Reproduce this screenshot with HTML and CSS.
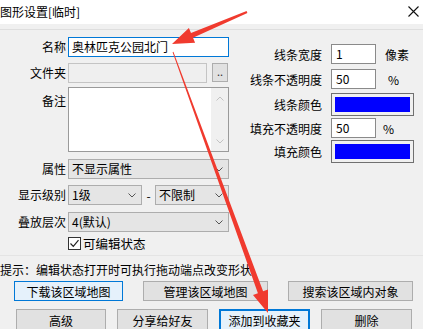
FILE: index.html
```html
<!DOCTYPE html>
<html lang="zh-CN">
<head>
<meta charset="utf-8">
<title>图形设置</title>
<link rel="stylesheet" href="styles.css">
</head>
<body>
<div class="win">
  <div class="titlebar">
    <span class="title">图形设置[临时]</span>
    <svg class="close" width="11" height="11" viewBox="0 0 11 11"><path d="M0.5 0.5 L10.5 10.5 M10.5 0.5 L0.5 10.5" stroke="#111" stroke-width="1.1" fill="none"/></svg>
  </div>
  <div class="topline"></div>
  <div class="main">
    <div class="left">
      <div class="row mt7">
        <span class="lbl">名称</span>
        <div class="ctl input focus">奥林匹克公园北门</div>
      </div>
      <div class="row mt6">
        <span class="lbl">文件夹</span>
        <div class="folder-wrap">
          <div class="input disabled folder"></div>
          <div class="dots">..</div>
        </div>
      </div>
      <div class="row notes-row mt4">
        <span class="lbl notes-lbl">备注</span>
        <div class="notes">
          <div class="notes-text"></div>
          <div class="vscroll">
            <div class="sarrow"><svg width="8" height="5" viewBox="0 0 8 5"><path d="M0.5 4.5 L4 1 L7.5 4.5" fill="none" stroke="#c2c2c2"/></svg></div>
            <div class="sarrow"><svg width="8" height="5" viewBox="0 0 8 5"><path d="M0.5 0.5 L4 4 L7.5 0.5" fill="none" stroke="#c2c2c2"/></svg></div>
          </div>
        </div>
      </div>
      <div class="row mt7">
        <span class="lbl">属性</span>
        <div class="ctl select"><span class="stext">不显示属性</span><svg class="chev" width="8" height="5" viewBox="0 0 8 5"><path d="M0.5 0.5 L4 4 L7.5 0.5" fill="none" stroke="#555"/></svg></div>
      </div>
      <div class="row mt6">
        <span class="lbl">显示级别</span>
        <div class="level">
          <div class="select half"><span class="stext">1级</span><svg class="chev" width="8" height="5" viewBox="0 0 8 5"><path d="M0.5 0.5 L4 4 L7.5 0.5" fill="none" stroke="#555"/></svg></div>
          <span class="dash">-</span>
          <div class="select half"><span class="stext">不限制</span><svg class="chev" width="8" height="5" viewBox="0 0 8 5"><path d="M0.5 0.5 L4 4 L7.5 0.5" fill="none" stroke="#555"/></svg></div>
        </div>
      </div>
      <div class="row mt7">
        <span class="lbl">叠放层次</span>
        <div class="ctl select"><span class="stext">4(默认)</span><svg class="chev" width="8" height="5" viewBox="0 0 8 5"><path d="M0.5 0.5 L4 4 L7.5 0.5" fill="none" stroke="#555"/></svg></div>
      </div>
      <div class="row check-row mt5">
        <span class="lbl"></span>
        <span class="checkbox"><svg width="11" height="11" viewBox="0 0 11 11"><path d="M1.5 5.5 L4.3 8.3 L9.5 2.2" fill="none" stroke="#222" stroke-width="1.2"/></svg></span>
        <span class="check-text">可编辑状态</span>
      </div>
    </div>
    <div class="right">
      <div class="rrow">
        <span class="rlbl">线条宽度</span>
        <div class="num">1</div>
        <span class="unit">像素</span>
      </div>
      <div class="rrow mt5">
        <span class="rlbl">线条不透明度</span>
        <div class="num">50</div>
        <span class="unit pct1">%</span>
      </div>
      <div class="rrow color-row mt4">
        <span class="rlbl">线条颜色</span>
        <div class="colorbox"><div class="swatch"></div></div>
      </div>
      <div class="rrow mt2">
        <span class="rlbl">填充不透明度</span>
        <div class="num">50</div>
        <span class="unit pct2">%</span>
      </div>
      <div class="rrow color-row mt2">
        <span class="rlbl">填充颜色</span>
        <div class="colorbox"><div class="swatch"></div></div>
      </div>
    </div>
  </div>
  <div class="hint">提示：编辑状态打开时可执行拖动端点改变形状</div>
  <div class="btnrow row1">
    <div class="btn default w109">下载该区域地图</div>
    <div class="btn w125">管理该区域地图</div>
    <div class="btn w125">搜索该区域内对象</div>
  </div>
  <div class="btnrow row2">
    <div class="btn w90">高级</div>
    <div class="btn w91">分享给好友</div>
    <div class="btn focused w91">添加到收藏夹</div>
    <div class="btn w91">删除</div>
  </div>
  <svg class="arrows" width="423" height="329" viewBox="0 0 423 329">
    <polygon fill="#f03a2e" points="246.6,11.1 191,33.1 188.9,28 172,44 195.1,42.8 193,37.7 247.4,12.9"/>
    <polygon fill="#f03a2e" points="172.6,52.2 257.9,293.3 253,295 268,313 268,289.6 263.1,291.3 173.4,51.8"/>
  </svg>
</div>
</body>
</html>
```

FILE: styles.css
```css
* { box-sizing: border-box; margin: 0; padding: 0; }
html, body { width: 423px; height: 329px; overflow: hidden; }
body {
  font-family: "Noto Sans CJK SC", "Microsoft YaHei", sans-serif;
  font-size: 12px;
  color: #000;
  background: #f0f0f0;
}
.win { position: relative; width: 423px; height: 329px; overflow: hidden; background: #f0f0f0; }

.titlebar {
  height: 24px; background: #fff;
  display: flex; align-items: center; justify-content: space-between;
  padding-right: 4px;
}
.title { line-height: 24px; font-size: 12px; }
.close { margin-top: -2px; }
.topline { height: 6px; border-bottom: 1px solid #dedede; }

.main { display: flex; }
.left { width: 229px; display: flex; flex-direction: column; }
.mt2 { margin-top: 2px; }
.mt4 { margin-top: 4px; }
.mt5 { margin-top: 5px; }
.mt6 { margin-top: 6px; }
.mt7 { margin-top: 7px; }

.row { display: flex; align-items: center; height: 20px; }
.lbl { width: 66px; margin-right: 2px; text-align: right; line-height: 20px; white-space: nowrap; flex: none; }
.ctl { width: 161px; height: 20px; flex: none; }

.input {
  background: #fff; border: 1px solid #7a7a7a;
  padding-left: 3px; line-height: 18px; white-space: nowrap; overflow: hidden;
}
.input.focus { border-color: #0078d7; }
.folder-wrap { display: flex; width: 161px; height: 20px; }
.input.disabled { background: #efefef; border-color: #c4c4c4; }
.folder { width: 139px; height: 20px; }
.dots {
  width: 16px; height: 19px; margin-left: 5px;
  background: #e1e1e1; border: 1px solid #adadad;
  text-align: center; line-height: 15px; font-size: 11px; color: #333;
}

.notes-row { height: 65px; align-items: flex-start; }
.notes-lbl { padding-top: 4px; }
.notes {
  width: 161px; height: 65px; background: #fff; border: 1px solid #9a9a9a;
  display: flex;
}
.notes-text { flex: 1; }
.vscroll {
  width: 17px; background: #f0f0f0;
  display: flex; flex-direction: column; justify-content: space-between;
}
.sarrow { height: 20px; display: flex; align-items: center; justify-content: center; }

.select {
  background: #e5e5e5; border: 1px solid #adadad;
  display: flex; align-items: center; padding-left: 3px; padding-right: 5px;
  line-height: 18px; white-space: nowrap;
}
.stext { flex: 1; }
.chev { flex: none; }
.level { display: flex; align-items: center; width: 161px; height: 20px; }
.half { width: 74px; height: 20px; }
.dash { width: 13px; text-align: center; }

.check-row { height: 13px; }
.checkbox {
  width: 13px; height: 13px; border: 1px solid #333; background: #fff;
  display: flex; align-items: center; justify-content: center; flex: none;
}
.check-text { margin-left: 2px; line-height: 13px; font-size: 12.5px; }

.right { margin-left: 11px; padding-top: 14px; display: flex; flex-direction: column; }
.rrow { display: flex; align-items: center; height: 20px; }
.rlbl { width: 82px; margin-right: 9px; text-align: right; white-space: nowrap; flex: none; }
.num {
  width: 45px; height: 20px; background: #fff; border: 1px solid #8a8a8a;
  padding-left: 4px; line-height: 18px; flex: none;
}
.unit { margin-left: 9px; }
.pct1 { margin-left: 12px; }
.pct2 { margin-left: 7px; }
.color-row { height: 23px; }
.colorbox {
  width: 83px; height: 23px; border: 1px solid #707070; background: #f0f0f0;
  padding: 3px;
}
.swatch { width: 100%; height: 100%; background: #0000ff; }

.hint {
  margin-top: 5px; border-top: 1px solid #e4e4e4;
  padding-top: 3px; line-height: 22px; white-space: nowrap;
}

.btnrow { display: flex; }
.row1 { padding-left: 14px; gap: 20px; height: 20px; }
.row2 { padding-left: 16px; gap: 11px; height: 22px; margin-top: 8px; }
.btn {
  height: 100%; background: #e1e1e1; border: 1px solid #adadad;
  display: flex; align-items: center; justify-content: center;
  white-space: nowrap; flex: none;
}
.btn.default { background: #e5f1fb; border-color: #0078d7; }
.btn.focused { background: #e5f1fb; border: 2px solid #0078d7; }
.w109 { width: 109px; }
.w125 { width: 125px; }
.w90 { width: 90px; }
.w91 { width: 91px; }

.arrows { position: absolute; left: 0; top: 0; pointer-events: none; }
```
